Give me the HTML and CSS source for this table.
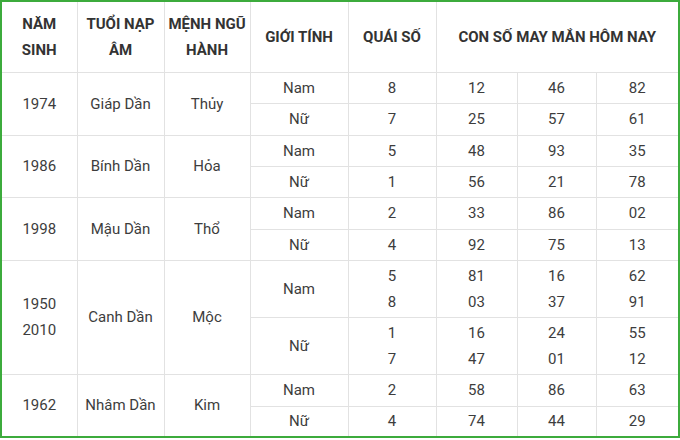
FILE: index.html
```html
<!DOCTYPE html>
<html lang="vi">
<head>
<meta charset="utf-8">
<link rel="stylesheet" href="styles.css">
</head>
<body>
<table class="lucky">
  <colgroup>
    <col class="c-year"><col class="c-tuoi"><col class="c-menh"><col class="c-gt">
    <col class="c-qs"><col class="c-n1"><col class="c-n2"><col class="c-n3">
  </colgroup>
  <thead>
    <tr class="head">
      <th>NĂM<br>SINH</th>
      <th>TUỔI NẠP<br>ÂM</th>
      <th>MỆNH NGŨ<br>HÀNH</th>
      <th>GIỚI TÍNH</th>
      <th>QUÁI SỐ</th>
      <th colspan="3">CON SỐ MAY MẮN HÔM NAY</th>
    </tr>
  </thead>
  <tbody>
    <tr class="r31"><td rowspan="2">1974</td><td rowspan="2">Giáp Dần</td><td rowspan="2">Thủy</td><td>Nam</td><td>8</td><td>12</td><td>46</td><td>82</td></tr>
    <tr class="r32"><td>Nữ</td><td>7</td><td>25</td><td>57</td><td>61</td></tr>
    <tr class="r31"><td rowspan="2">1986</td><td rowspan="2">Bính Dần</td><td rowspan="2">Hỏa</td><td>Nam</td><td>5</td><td>48</td><td>93</td><td>35</td></tr>
    <tr class="r31"><td>Nữ</td><td>1</td><td>56</td><td>21</td><td>78</td></tr>
    <tr class="r32"><td rowspan="2">1998</td><td rowspan="2">Mậu Dần</td><td rowspan="2">Thổ</td><td>Nam</td><td>2</td><td>33</td><td>86</td><td>02</td></tr>
    <tr class="r31"><td>Nữ</td><td>4</td><td>92</td><td>75</td><td>13</td></tr>
    <tr class="r57"><td rowspan="2">1950<br>2010</td><td rowspan="2">Canh Dần</td><td rowspan="2">Mộc</td><td>Nam</td><td>5<br>8</td><td>81<br>03</td><td>16<br>37</td><td>62<br>91</td></tr>
    <tr class="r57"><td>Nữ</td><td>1<br>7</td><td>16<br>47</td><td>24<br>01</td><td>55<br>12</td></tr>
    <tr class="r32"><td rowspan="2">1962</td><td rowspan="2">Nhâm Dần</td><td rowspan="2">Kim</td><td>Nam</td><td>2</td><td>58</td><td>86</td><td>63</td></tr>
    <tr class="r31"><td>Nữ</td><td>4</td><td>74</td><td>44</td><td>29</td></tr>
  </tbody>
</table>
</body>
</html>
```
FILE: styles.css
```css
html, body {
  margin: 0;
  padding: 0;
  background: #fff;
}
body {
  font-family: Roboto, "Liberation Sans", sans-serif;
  color: #3d3d3d;
}
.lucky {
  width: 678px;
  border-collapse: collapse;
  table-layout: fixed;
  border: 2px solid #3cab3c;
}
.c-year { width: 76px; }
.c-tuoi { width: 87px; }
.c-menh { width: 86px; }
.c-gt { width: 98px; }
.c-qs { width: 88px; }
.c-n1 { width: 81px; }
.c-n2 { width: 79px; }
.c-n3 { width: 83px; }
.lucky th,
.lucky td {
  border: 1px solid #e2e2e2;
  text-align: center;
  vertical-align: middle;
  padding: 0;
  font-size: 15px;
  line-height: 26px;
}
.lucky th {
  font-weight: 700;
  color: #333;
}
.head { height: 71px; }
.r31 { height: 31px; }
.r32 { height: 32px; }
.r57 { height: 57px; }
```
